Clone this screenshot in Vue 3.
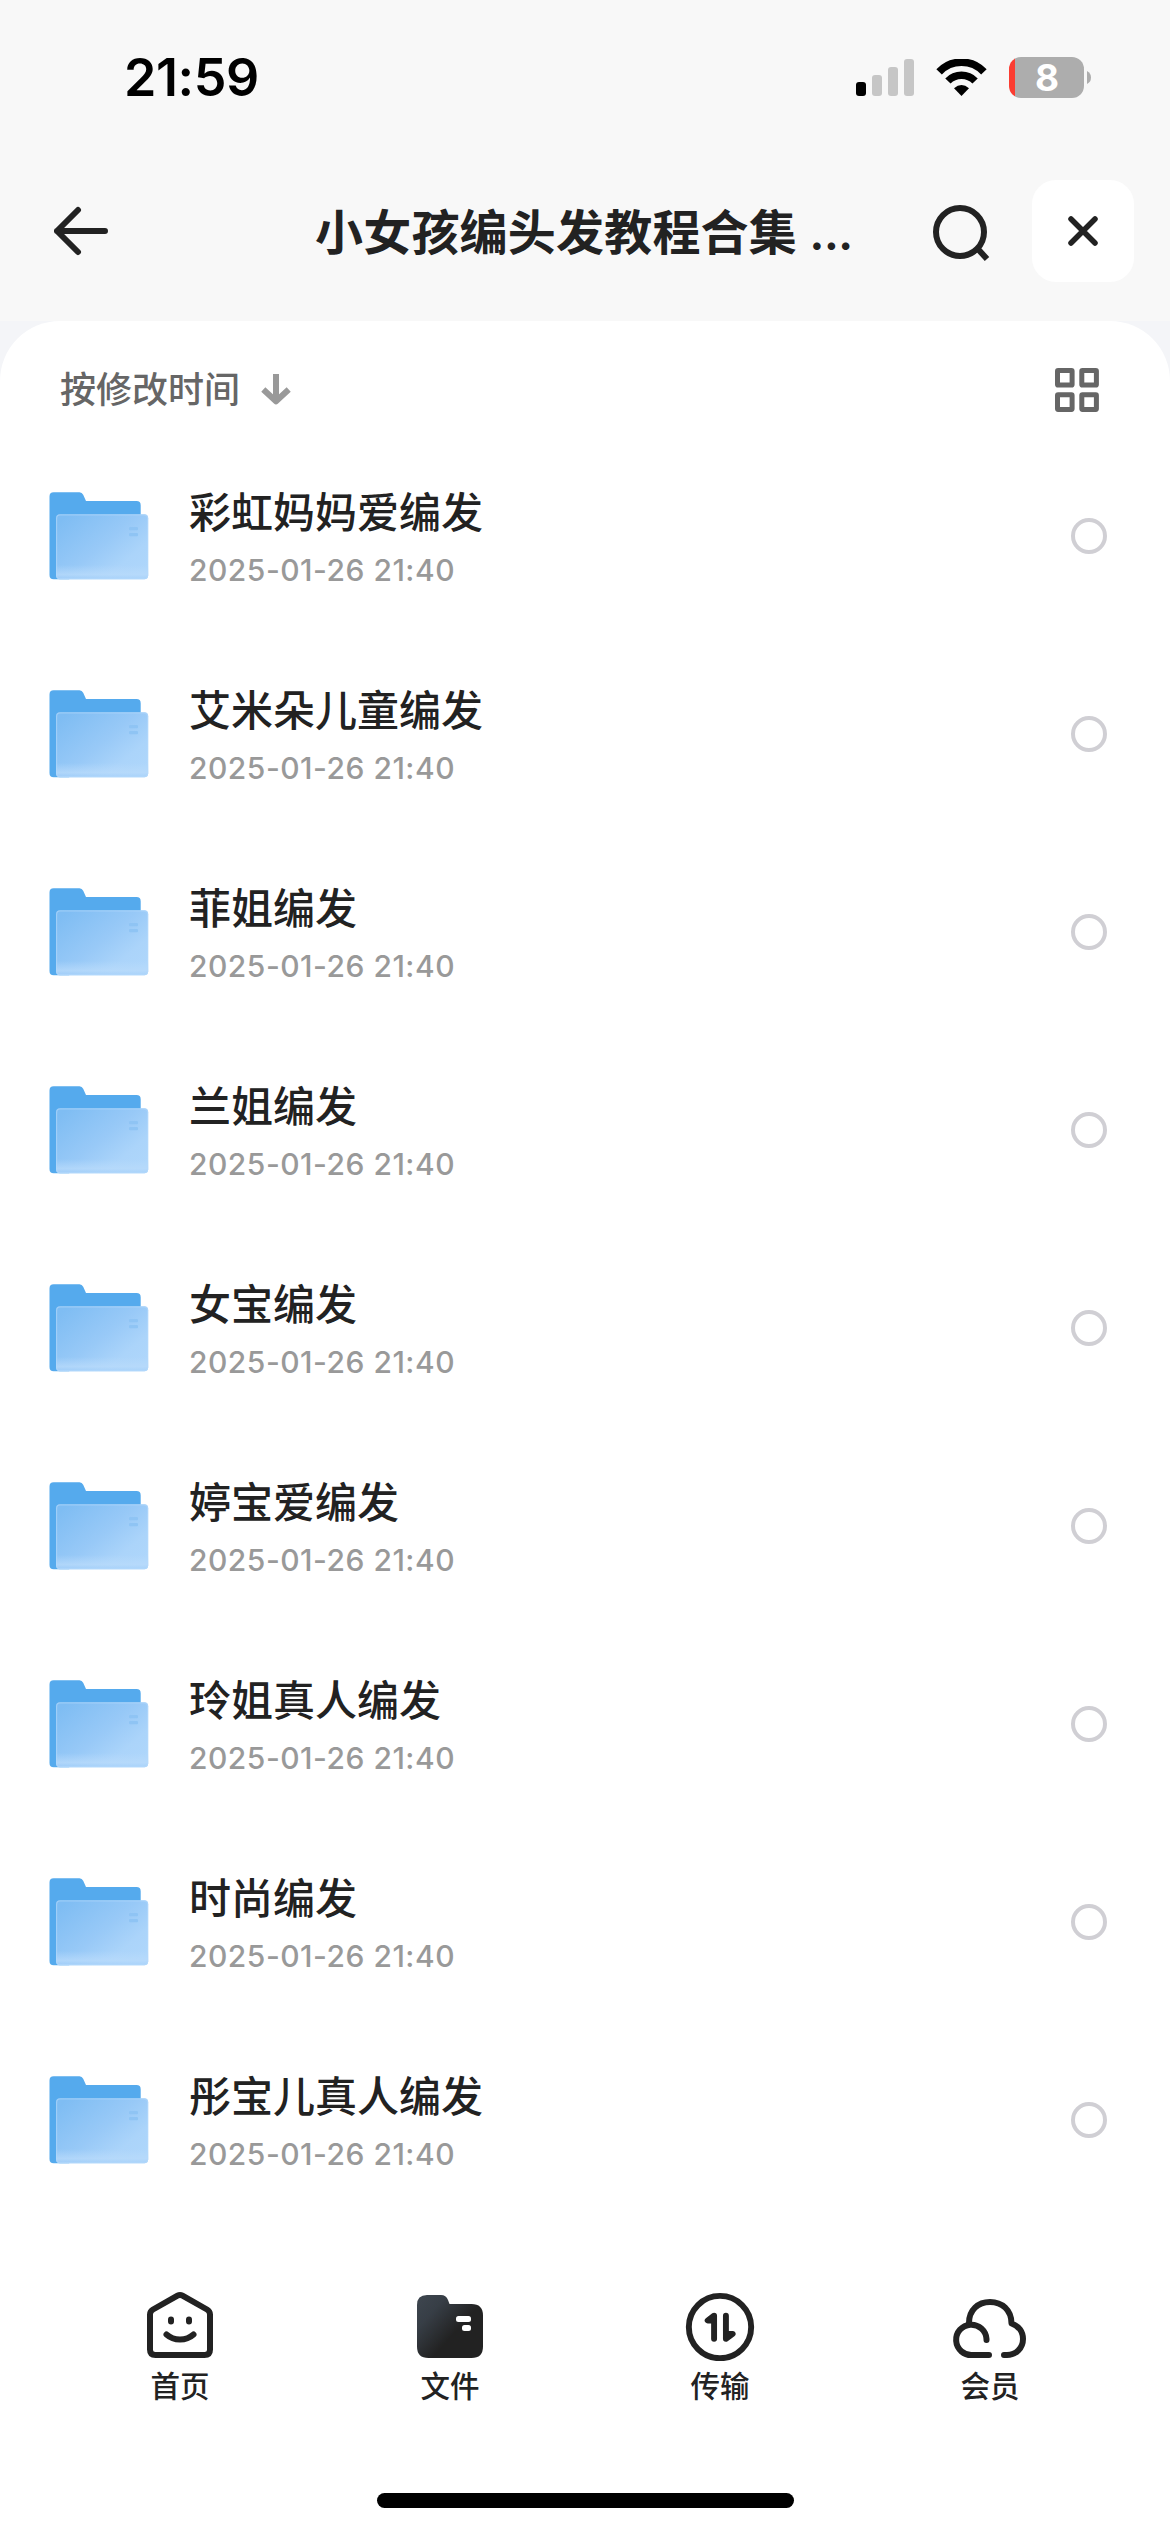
<script setup>
const folders = [
  '彩虹妈妈爱编发',
  '艾米朵儿童编发',
  '菲姐编发',
  '兰姐编发',
  '女宝编发',
  '婷宝爱编发',
  '玲姐真人编发',
  '时尚编发',
  '彤宝儿真人编发',
].map((name) => ({ name, time: '2025-01-26 21:40' }))
</script>

<template>
  <main class="screen">
    <div class="status">
      <span class="clock">21:59</span>
      <div class="indicators">
        <svg class="signal" width="58" height="38" viewBox="0 0 58 38">
          <rect x="0" y="23" width="10" height="14" rx="3" fill="#000" />
          <rect x="16" y="16" width="10" height="21" rx="3" fill="#c6c6c6" />
          <rect x="32" y="8" width="10" height="29" rx="3" fill="#c6c6c6" />
          <rect x="48" y="0" width="10" height="37" rx="3" fill="#c6c6c6" />
        </svg>
        <svg class="wifi" width="51" height="38" viewBox="0 0 51 38">
          <path d="M3.1 12.8A31 31 0 0 1 47.9 12.8" fill="none" stroke="#000" stroke-width="7.6" />
          <path d="M11.900 22A19 19 0 0 1 39.100 22" fill="none" stroke="#000" stroke-width="7.4" />
          <path d="M25.5 37L18 29.3Q25.5 22.7 33 29.3Z" fill="#000" />
        </svg>
        <div class="battery">
          <div class="cell">8</div>
          <svg width="4" height="13" viewBox="0 0 4 13"><path d="M0 0Q4 2 4 6.5T0 13Z" fill="#adadad" /></svg>
        </div>
      </div>
    </div>

    <header class="bar">
      <svg class="back" width="56" height="54" viewBox="0 0 56 54" fill="none" stroke="#222" stroke-width="6" stroke-linecap="round" stroke-linejoin="round">
        <path d="M24 6L3 27L24 48M3 27H51" />
      </svg>
      <h1 class="title">小女孩编头发教程合集 <span class="dots">...</span></h1>
      <svg class="search" width="58" height="58" viewBox="0 0 58 58" fill="none" stroke="#222" stroke-width="6">
        <circle cx="28" cy="28" r="24" />
        <path d="M45 44L55 55" />
      </svg>
      <button class="close">
        <svg width="32" height="32" viewBox="0 0 32 32" fill="none" stroke="#222" stroke-width="5.500" stroke-linecap="round">
          <path d="M4 4L28 28M28 4L4 28" />
        </svg>
      </button>
    </header>

    <div class="sheet-wrap">
      <section class="sheet">
        <div class="sort">
          <span class="sort-label">按修改时间</span>
          <svg class="sort-arrow" width="30" height="32" viewBox="0 0 30 32" fill="none" stroke="#999" stroke-width="6">
            <path d="M15 0V28M2.3 15.5L15 27.3L27.7 15.5" stroke-linejoin="round" />
          </svg>
          <svg class="grid" width="44" height="44" viewBox="0 0 44 44" fill="none" stroke="#666" stroke-width="5">
            <rect x="2.5" y="2.5" width="14.6" height="14.6" rx="0.6" />
            <rect x="26.8" y="2.5" width="14.6" height="14.6" rx="0.6" />
            <rect x="2.5" y="26.8" width="14.6" height="14.6" rx="0.6" />
            <rect x="26.8" y="26.8" width="14.6" height="14.6" rx="0.6" />
          </svg>
        </div>

        <ul class="list">
          <li v-for="(folder, i) in folders" :key="folder.name" class="row">
            <svg class="folder" width="100" height="88" viewBox="0 0 100 88">
              <defs>
                <linearGradient :id="`front${i}`" x1="0.05" y1="0.1" x2="0.95" y2="0.85">
                  <stop offset="0" stop-color="#7fbdf3" />
                  <stop offset="0.5" stop-color="#98c9f7" />
                  <stop offset="0.8" stop-color="#abd4fa" />
                  <stop offset="1" stop-color="#aed6fb" />
                </linearGradient>
                <linearGradient :id="`shine${i}`" x1="0" y1="0" x2="0" y2="1">
                  <stop offset="0.78" stop-color="#b9dbfb" stop-opacity="0" />
                  <stop offset="0.93" stop-color="#b9dbfb" stop-opacity="0.75" />
                  <stop offset="1" stop-color="#a5d0f9" stop-opacity="0.5" />
                </linearGradient>
              </defs>
              <path d="M0.5 4.5Q0.5 0.3 4.7 0.3H30.5Q33 0.3 34.2 2.8L37 9H87.5Q91.7 9 91.7 13.2V40L20 87.3H4.7Q0.5 87.3 0.5 83Z" fill="#55aaed" />
              <rect x="7" y="22.3" width="92.2" height="65" rx="4" :fill="`url(#front${i})`" />
              <rect x="7" y="22.3" width="92.2" height="65" rx="4" :fill="`url(#shine${i})`" />
              <rect x="7.6" y="22.9" width="91" height="63.8" rx="3.5" fill="none" stroke="#b4d9fb" stroke-opacity="0.6" stroke-width="1.2" />
              <rect x="80" y="35" width="9" height="3.2" rx="1" fill="#8fc4f4" />
              <rect x="80" y="41" width="9" height="3.2" rx="1" fill="#8fc4f4" />
            </svg>
            <div class="info">
              <span class="name">{{ folder.name }}</span>
              <span class="time">{{ folder.time }}</span>
            </div>
            <span class="check"></span>
          </li>
        </ul>
      </section>
    </div>

    <nav class="tabs">
      <div class="tab">
        <svg width="72" height="72" viewBox="0 0 72 72" fill="none" stroke="#222" stroke-width="6" stroke-linecap="round" stroke-linejoin="round">
          <path d="M33.5 6.700Q36 5.300 38.5 6.700L63 20.500Q66 22.300 66 25.500V60.500Q66 66 60.500 66H11.500Q6 66 6 60.500V25.500Q6 22.300 9 20.500Z" />
          <path d="M27 30.500V32.500M45 30.500V32.500" />
          <path d="M22.500 45.500Q28 50.500 36 50.500T49.500 45.500" />
        </svg>
        <span>首页</span>
      </div>
      <div class="tab">
        <svg width="72" height="72" viewBox="0 0 72 72">
          <defs>
            <linearGradient id="dark" x1="0" y1="0.15" x2="0.55" y2="0.62">
              <stop offset="0" stop-color="#3c444d" />
              <stop offset="0.35" stop-color="#373e46" />
              <stop offset="1" stop-color="#222" />
            </linearGradient>
          </defs>
          <path d="M3 16Q3 6 13 6H27Q32 6 34 11L35.500 15H57.500Q69 15 69 26.500V57.500Q69 69 57.500 69H14.500Q3 69 3 57.500Z" fill="url(#dark)" />
          <rect x="42" y="27" width="15" height="6" rx="2.500" fill="#fff" />
          <rect x="48" y="36" width="9" height="6" rx="2.500" fill="#fff" />
        </svg>
        <span>文件</span>
      </div>
      <div class="tab">
        <svg width="72" height="72" viewBox="0 0 72 73" fill="none" stroke="#222" stroke-width="6" stroke-linecap="round" stroke-linejoin="round">
          <circle cx="36" cy="38.600" r="31.600" />
          <path d="M30 50.500V27L23.500 32H30M42 27V50.500L48.800 45.500H42" />
        </svg>
        <span>传输</span>
      </div>
      <div class="tab">
        <svg width="76" height="72" viewBox="0 0 76 72" fill="none" stroke="#222" stroke-width="6" stroke-linecap="round" stroke-linejoin="round">
          <path d="M34.500 51V50A15.200 15.200 0 1 0 20.500 66H37" />
          <path d="M17 34C17 21 26 13 38 13S59.500 21 59.500 34.500C67 37 71 43 71 50C71 59 64 66 55 66H52" />
        </svg>
        <span>会员</span>
      </div>
    </nav>
    <div class="home-bar"></div>
  </main>
</template>

<style>
body {
  margin: 0;
  background: #fff;
}
</style>

<style scoped>
.screen {
  width: 1170px;
  height: 2532px;
  overflow: hidden;
  display: flex;
  flex-direction: column;
  background: #fff;
  color: #222;
  font-family: Inter, "Noto Sans CJK SC", sans-serif;
}
svg {
  display: block;
  flex: none;
}
.status {
  height: 141px;
  box-sizing: border-box;
  padding: 48px 79px 0 124px;
  display: flex;
  justify-content: space-between;
  align-items: flex-start;
  background: #f8f8f8;
}
.clock {
  font-size: 52px;
  line-height: 60px;
  font-weight: 600;
  color: #000;
  letter-spacing: -0.4px;
}
.indicators {
  display: flex;
  align-items: flex-start;
  padding-top: 9px;
}
.signal {
  margin: 2px 22px 0 0;
}
.wifi {
  margin: 2px 22px 0 0;
}
.battery {
  display: flex;
  align-items: center;
  gap: 3px;
}
.cell {
  width: 75px;
  height: 41px;
  box-sizing: border-box;
  padding-left: 1px;
  border-radius: 12px;
  background: linear-gradient(to right, #fb3d32 6px, #adadad 6px);
  text-align: center;
  font-size: 37px;
  line-height: 41px;
  font-weight: 700;
  color: #fff;
}
.bar {
  height: 180px;
  box-sizing: border-box;
  padding: 0 36px 0 54px;
  display: flex;
  align-items: center;
  background: #f8f8f8;
}
.title {
  margin: 3px 0 0 205px;
  width: 617px;
  font-size: 48px;
  line-height: 60px;
  font-weight: 600;
  white-space: nowrap;
  letter-spacing: 0.2px;
}
.dots {
  letter-spacing: -0.9px;
}
.search {
  margin-top: 4px;
}
.close {
  width: 102px;
  height: 102px;
  margin-left: auto;
  padding: 0 0 1px;
  border: 0;
  border-radius: 24px;
  background: #fff;
  display: flex;
  align-items: center;
  justify-content: center;
}
.sheet-wrap {
  background: #f4f5f8;
}
.sheet {
  border-radius: 60px 60px 0 0;
  background: #fff;
}
.sort {
  height: 116px;
  padding: 22px 71px 0 60px;
  box-sizing: border-box;
  padding-top: 22px;
  display: flex;
  align-items: center;
}
.sort-label {
  font-size: 36px;
  line-height: 48px;
  font-weight: 500;
  color: #666;
}
.sort-arrow {
  margin-left: 21px;
}
.grid {
  margin-left: auto;
}
.list {
  margin: 0;
  padding: 0;
  list-style: none;
}
.row {
  height: 198px;
  box-sizing: border-box;
  padding: 0 63px 0 49px;
  display: flex;
  align-items: center;
}
.info {
  margin-left: 40px;
  padding-top: 7px;
  display: flex;
  flex-direction: column;
}
.name {
  font-size: 42px;
  line-height: 60px;
  font-weight: 500;
  white-space: nowrap;
}
.time {
  font-size: 30px;
  line-height: 54px;
  font-weight: 500;
  color: #999;
  white-space: nowrap;
  letter-spacing: 0.5px;
}
.check {
  width: 36px;
  height: 36px;
  box-sizing: border-box;
  margin-left: auto;
  border: 4px solid #d0cfd4;
  border-radius: 50%;
}
.tabs {
  height: 274px;
  box-sizing: border-box;
  padding: 70px 45px 0;
  display: flex;
}
.tab {
  width: 270px;
  display: flex;
  flex-direction: column;
  align-items: center;
  font-size: 29.5px;
  line-height: 42px;
  font-weight: 500;
}
.tab span {
  margin-top: 4px;
}
.home-bar {
  width: 417px;
  height: 15px;
  margin-left: 377px;
  border-radius: 8px;
  background: #000;
}
</style>
